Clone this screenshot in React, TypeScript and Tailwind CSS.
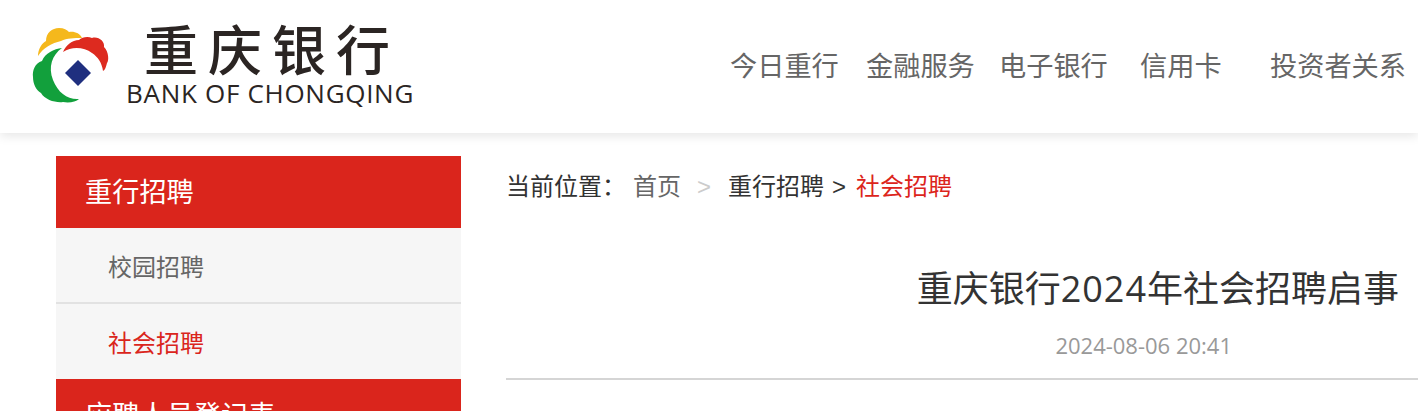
const cjk = "font-['Liberation_Sans','Noto_Sans_CJK_SC',sans-serif]";

const navItems = [
  { label: "今日重行", width: "w-[136px]" },
  { label: "金融服务", width: "w-[133px]" },
  { label: "电子银行", width: "w-[141px]" },
  { label: "信用卡", width: "w-[130px]" },
  { label: "投资者关系", width: "w-[148px]" },
];

const Logo = () => (
  <div className="flex items-start">
    <svg width="82" height="80" viewBox="0 0 82 80" className="mt-[25px] ml-[30px]">
      <path d="M8 31 C8 24 12 18 16 16 C16 8 22 3 29 3 C34 3 37 5 39 7 C44 6 50 8 52 13 C44 13 37 13 31 16 C22 18 13 23 8 31Z" fill="#f5b81c" />
      <path d="M33 27 C36 20 42 15 49 15 C52 12 58 11 62 13 C68 11 75 16 74 22 C79 27 79 36 77 38 C76 42 75 45 73 46 C72 38 68 32 62 28 C54 22 42 21 33 27Z" fill="#dd2a1f" />
      <path d="M32 23 C24 24 15 28 12 36 C5 38 2 46 3 52 C3 59 6 65 11 68 C15 75 26 78 33 77 C39 78 46 77 49 74 C38 75 28 68 23 55 C18 42 22 30 32 23Z" fill="#12a03c" />
      <path d="M48 35 L61 48 L48 61 L35 48Z" fill="#1f2f7f" />
    </svg>
    <div className="flex flex-col ml-[14px]">
      <span className="mt-[17px] ml-[18px] text-[54px] leading-[62px] tracking-[10px] font-medium text-[#2b2523] whitespace-nowrap font-['Noto_Sans_CJK_SC',sans-serif]">重庆银行</span>
      <span className="mt-[1px] text-[26px] leading-[26px] tracking-[0.7px] text-[#2b2523] font-['Open_Sans',sans-serif] whitespace-nowrap">BANK OF CHONGQING</span>
    </div>
  </div>
);

const Breadcrumb = () => (
  <div className="flex items-center h-[62px] text-[24px] text-[#333333] whitespace-nowrap">
    <span>当前位置：</span>
    <span className="text-[#666666] ml-[7px]">首页</span>
    <span className="text-[#cccccc] ml-[16px]">&gt;</span>
    <span className="ml-[17px]">重行招聘</span>
    <span className="ml-[8px]">&gt;</span>
    <span className="ml-[10px] text-[#dc251c]">社会招聘</span>
  </div>
);

export default function App() {
  return (
    <div className={`w-[1418px] h-[411px] overflow-hidden bg-white ${cjk}`}>
      <header className="h-[133px] flex justify-between shadow-[0_3px_10px_rgba(0,0,0,0.1)] relative">
        <Logo />
        <nav className="flex items-start pt-[48px]">
          {navItems.map((item) => (
            <a key={item.label} className={`${item.width} text-[27.2px] leading-[38px] text-[#666666] whitespace-nowrap`}>
              {item.label}
            </a>
          ))}
        </nav>
      </header>
      <div className="flex pt-[23px] pl-[56px]">
        <aside className="w-[405px] shrink-0">
          <div className="h-[72px] bg-[#da251c] text-white text-[27.2px] leading-[74px] pl-[29px]">重行招聘</div>
          <div className="h-[76px] bg-[#f6f6f6] border-b-2 border-[#e2e2e2] text-[#666666] text-[24px] leading-[80px] pl-[52px]">校园招聘</div>
          <div className="h-[75px] bg-[#f6f6f6] text-[#da251c] text-[24px] leading-[80px] pl-[52px]">社会招聘</div>
          <div className="h-[72px] bg-[#da251c] text-white text-[27.2px] leading-[74px] pl-[29px]">应聘人员登记表</div>
        </aside>
        <main className="ml-[45px] flex-1">
          <Breadcrumb />
          <h1 className="text-right pr-[19px] mt-[46px] text-[36px] leading-[50px] text-[#333333] font-['Open_Sans','Noto_Sans_CJK_SC',sans-serif]">
            重庆银行<span className="tracking-[1px]">2024</span>年社会招聘启事
          </h1>
          <div className="text-right pr-[186px] mt-[16px] text-[22px] leading-[30px] text-[#999999] font-['Open_Sans',sans-serif]">2024-08-06 20:41</div>
          <div className="mt-[18px] border-b-2 border-[#d5d5d5]" />
        </main>
      </div>
    </div>
  );
}
